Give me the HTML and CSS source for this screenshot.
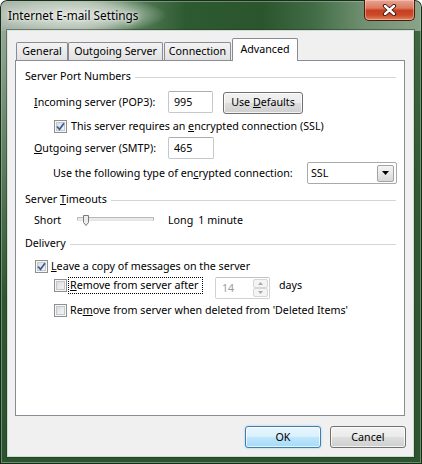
FILE: index.html
```html
<!DOCTYPE html>
<html>
<head>
<meta charset="utf-8">
<title>Internet E-mail Settings</title>
<link rel="stylesheet" href="styles.css">
</head>
<body>
<div class="window">
  <div class="titlebar">
    <span class="title">Internet E-mail Settings</span>
    <span class="close">
      <svg width="15" height="12" viewBox="0 0 15 12"><path d="M3 2 L12 10 M12 2 L3 10" stroke="#3a1208" stroke-width="4.2" stroke-linecap="round" fill="none"/><path d="M3 2 L12 10 M12 2 L3 10" stroke="#fff" stroke-width="2.4" stroke-linecap="round" fill="none"/></svg>
    </span>
  </div>
  <div class="client">
    <div class="tabs">
      <div class="tab t-general">General</div>
      <div class="tab t-outgoing">Outgoing Server</div>
      <div class="tab t-connection">Connection</div>
      <div class="tab tab-active t-advanced">Advanced</div>
    </div>
    <div class="panel">
      <div class="group-head g1"><span>Server Port Numbers</span><i class="rule"></i></div>
      <div class="row r-incoming">
        <span class="lbl"><u>I</u>ncoming server (POP3):</span>
        <span class="field f-in">995</span>
        <span class="btn btn-defaults"><span>Use <u>D</u>efaults</span></span>
      </div>
      <div class="row r-ssl">
        <span class="cb"><svg width="9" height="9" viewBox="0 0 9 9"><path d="M1 4.5 L3.5 7.3 L8 1.2" fill="none" stroke="#3c5a98" stroke-width="1.7"/></svg></span>
        <span class="cbtext">This server requires an <u>e</u>ncrypted connection (SSL)</span>
      </div>
      <div class="row r-outgoing">
        <span class="lbl"><u>O</u>utgoing server (SMTP):</span>
        <span class="field f-out">465</span>
      </div>
      <div class="row r-type">
        <span>Use the following type of en<u>c</u>rypted connection:</span>
        <span class="select"><span class="sel-val">SSL</span><span class="drop"><svg width="7" height="4" viewBox="0 0 7 4"><path d="M0 0 H7 L3.5 4 Z" fill="#000"/></svg></span></span>
      </div>
      <div class="group-head g2"><span>Server <u>T</u>imeouts</span><i class="rule"></i></div>
      <div class="row r-slider">
        <span class="short">Short</span>
        <span class="slider"><span class="track"></span><svg class="thumb" width="7" height="11" viewBox="0 0 7 11"><path d="M0.5 0.5 H5.5 V7.5 L3 10.5 L0.5 7.5 Z" fill="#ececec" stroke="#7a7a7a"/></svg></span>
        <span class="long">Long</span>
        <span class="minute">1 minute</span>
      </div>
      <div class="group-head g3"><span>Delivery</span><i class="rule"></i></div>
      <div class="row r-leave">
        <span class="cb"><svg width="9" height="9" viewBox="0 0 9 9"><path d="M1 4.5 L3.5 7.3 L8 1.2" fill="none" stroke="#3c5a98" stroke-width="1.7"/></svg></span>
        <span class="cbtext-s"><u>L</u>eave a copy of messages on the server</span>
      </div>
      <div class="row r-after">
        <span class="cb"></span>
        <span class="focus"><u>R</u>emove from server after</span>
        <span class="spin"><span class="spin-val">14</span><span class="spin-btns"><span class="sb"><svg width="5" height="3" viewBox="0 0 5 3"><path d="M0 3 L2.5 0 L5 3 Z" fill="#a8a8a8"/></svg></span><span class="sb"><svg width="5" height="3" viewBox="0 0 5 3"><path d="M0 0 H5 L2.5 3 Z" fill="#a8a8a8"/></svg></span></span></span>
        <span class="days">days</span>
      </div>
      <div class="row r-deleted">
        <span class="cb"></span>
        <span class="cbtext-s">Re<u>m</u>ove from server when deleted from 'Deleted Items'</span>
      </div>
    </div>
    <div class="buttons">
      <span class="btn btn-ok"><span>OK</span></span>
      <span class="btn btn-cancel"><span>Cancel</span></span>
    </div>
  </div>
</div>
</body>
</html>
```

FILE: styles.css
```css
html, body {
  margin: 0;
  padding: 0;
  background: #ffffff;
}

body {
  font-family: "Noto Sans", "Open Sans", sans-serif;
  font-size: 10.7px;
  line-height: 15px;
  color: #000;
}

u {
  text-decoration: underline;
  text-underline-offset: 1px;
}

.window {
  width: 422px;
  height: 464px;
  box-sizing: border-box;
  padding: 0 9px 8px 8px;
  display: flex;
  flex-direction: column;
  border-radius: 7px 7px 0 0;
  box-shadow: inset 0 0 0 1px #1a2a1b, inset 0 0 0 2px rgba(170, 200, 170, 0.5);
  background:
    radial-gradient(ellipse 95px 20px at 72px 15px, rgba(222, 229, 222, 0.95) 0%, rgba(205, 216, 205, 0.65) 60%, rgba(205, 216, 205, 0) 100%),
    linear-gradient(90deg, #a3b1a3 0%, #98a898 20%, #557d57 32%, #2e5a31 44%, #2a552d 62%, #406b44 74%, #6f8f70 86%, #8aa48a 100%) 0 0 / 100% 31px no-repeat,
    linear-gradient(180deg, rgba(165, 180, 165, 0.95) 0px, rgba(165, 180, 165, 0.5) 120px, rgba(165, 180, 165, 0) 300px) 0 0 / 8px 100% no-repeat,
    linear-gradient(180deg, #3f6a42 0%, #2e5931 40%, #2b552f 100%);
}

.titlebar {
  height: 31px;
  display: flex;
  align-items: flex-start;
  flex: none;
}

.title {
  padding-top: 7px;
  font-size: 11.8px;
  line-height: 16px;
  color: #000;
  text-shadow: 0 0 6px rgba(255, 255, 255, 0.9), 0 0 3px rgba(255, 255, 255, 0.8);
}

.close {
  margin-left: auto;
  margin-right: -2px;
  width: 51px;
  height: 21px;
  box-sizing: border-box;
  border: 1px solid #4a1a10;
  border-top: none;
  border-radius: 0 0 5px 5px;
  background: linear-gradient(180deg, #e9a493 0%, #dc7a62 40%, #c7401f 52%, #c94a28 75%, #e3855f 100%);
  box-shadow: inset 0 0 0 1px rgba(255, 220, 210, 0.45);
  display: flex;
  align-items: center;
  justify-content: center;
}

.client {
  flex: none;
  width: 405px;
  height: 425px;
  box-sizing: border-box;
  padding: 7px 8px 8px 7px;
  background: #f0f0f0;
  box-shadow: 0 0 0 1px rgba(255, 255, 255, 0.8), 0 0 0 2px rgba(30, 50, 30, 0.45);
  display: flex;
  flex-direction: column;
}

.tabs {
  height: 22px;
  display: flex;
  align-items: flex-end;
  margin-left: 1px;
  flex: none;
}

.tab {
  height: 18px;
  box-sizing: border-box;
  border: 1px solid #898c95;
  border-bottom: none;
  background: linear-gradient(180deg, #f3f3f3 0%, #ebebeb 50%, #e1e1e1 100%);
  text-align: center;
  padding-top: 1px;
  border-radius: 2px 2px 0 0;
}

.t-general { width: 52px; }
.t-outgoing { width: 95px; margin-left: 0; }
.t-connection { width: 67px; margin-left: 1px; }

.tab-active {
  position: relative;
  z-index: 1;
  height: 23px;
  margin-bottom: -1px;
  background: #fff;
  padding-top: 3px;
}

.t-advanced { width: 66px; margin-left: 1px; }

.panel {
  height: 356px;
  box-sizing: border-box;
  border: 1px solid #898c95;
  background: #fff;
  padding: 8px 8px 0 9px;
  flex: none;
}

.group-head {
  display: flex;
  align-items: center;
  height: 15px;
}

.rule {
  flex: 1;
  height: 1px;
  background: #d5d5d5;
  margin-left: 4px;
  margin-top: 1px;
}

.g2 { margin-top: 8px; }
.g3 { margin-top: 8px; }

.row {
  display: flex;
  align-items: center;
}

.r-incoming {
  margin-top: 7px;
  height: 22px;
  padding-left: 9px;
}

.lbl {
  width: 134px;
  flex: none;
}

.field {
  height: 22px;
  box-sizing: border-box;
  border: 1px solid #c5c7cc;
  border-top-color: #abadb3;
  border-radius: 2px;
  background: #fff;
  padding-left: 5px;
  display: flex;
  align-items: center;
}

.f-in { width: 45px; }
.f-out { width: 46px; }

.btn {
  box-sizing: border-box;
  height: 22px;
  border: 1px solid #707070;
  border-radius: 3px;
  background: linear-gradient(180deg, #f2f2f2 0%, #ebebeb 48%, #dddddd 52%, #cfcfcf 100%);
  box-shadow: inset 0 0 0 1px rgba(255, 255, 255, 0.75);
  display: flex;
  align-items: center;
  justify-content: center;
}

.btn-defaults {
  width: 80px;
  margin-left: 10px;
  margin-top: 1px;
}

.r-ssl {
  margin-top: 6px;
  height: 15px;
  padding-left: 29px;
}

.cb {
  width: 13px;
  height: 13px;
  box-sizing: border-box;
  flex: none;
  border: 1px solid #8e8f8f;
  background: linear-gradient(135deg, #cdd1d6 0%, #e8eaec 50%, #f8f8f8 100%);
  box-shadow: inset 0 0 0 1px #f6f6f6, inset 0 0 0 2px #c4c8cd;
  display: flex;
  align-items: center;
  justify-content: center;
}

.cbtext { margin-left: 4px; }
.cbtext-s { margin-left: 3px; }

.r-outgoing {
  margin-top: 3px;
  height: 22px;
  padding-left: 9px;
}

.r-type {
  margin-top: 3px;
  height: 22px;
  padding-left: 28px;
}

.select {
  margin-left: auto;
  margin-right: -1px;
  width: 90px;
  height: 22px;
  box-sizing: border-box;
  border: 1px solid #a9a9a9;
  border-radius: 2px;
  background: #fff;
  display: flex;
  align-items: center;
  padding: 0 2px 0 3px;
}

.sel-val { flex: 1; }

.drop {
  width: 17px;
  height: 17px;
  box-sizing: border-box;
  border: 1px solid #a3a3a3;
  border-radius: 2px;
  background: linear-gradient(180deg, #f4f4f4 0%, #e8e8e8 50%, #d8d8d8 100%);
  display: flex;
  align-items: center;
  justify-content: center;
}

.r-slider {
  margin-top: 5px;
  height: 16px;
  padding-left: 9px;
}

.short {
  width: 43px;
  flex: none;
}

.slider {
  position: relative;
  width: 77px;
  height: 16px;
  flex: none;
}

.track {
  display: block;
  margin-top: 5px;
  height: 4px;
  box-sizing: border-box;
  border: 1px solid #b9b9b9;
  border-bottom-color: #e4e4e4;
  border-radius: 1px;
  background: #e9eaea;
}

.thumb {
  position: absolute;
  left: 6px;
  top: 3px;
}

.long {
  margin-left: 14px;
  flex: none;
}

.minute {
  margin-left: 5px;
}

.r-leave {
  margin-top: 8px;
  height: 15px;
  padding-left: 10px;
}

.r-after {
  margin-top: 3px;
  height: 22px;
  padding-left: 29px;
  align-items: flex-start;
}

.r-after .cb { margin-top: 2px; }

.focus {
  margin-left: 1px;
  width: 135px;
  flex: none;
  box-sizing: border-box;
  border: 1px dotted #000;
  padding: 0 1px;
  line-height: 15px;
}

.spin {
  margin-left: 12px;
  width: 55px;
  height: 22px;
  box-sizing: border-box;
  border: 1px solid #d0d2d6;
  border-top-color: #c0c2c7;
  border-radius: 2px;
  background: #fff;
  display: flex;
  align-items: center;
  padding: 1px 1px 1px 6px;
  flex: none;
}

.spin-val {
  flex: 1;
  color: #9a9a9a;
}

.spin-btns {
  width: 15px;
  height: 18px;
  display: flex;
  flex-direction: column;
}

.sb {
  flex: 1;
  box-sizing: border-box;
  border: 1px solid #d6d6d6;
  border-radius: 2px;
  background: #f4f4f4;
  display: flex;
  align-items: center;
  justify-content: center;
}

.days {
  margin-left: 9px;
  margin-top: 1px;
}

.r-deleted {
  margin-top: 4px;
  height: 15px;
  padding-left: 29px;
}

.buttons {
  display: flex;
  justify-content: flex-end;
  gap: 9px;
  margin-top: 10px;
  margin-right: -1px;
  flex: none;
}

.btn-ok,
.btn-cancel {
  width: 76px;
}

.btn-ok {
  border-color: #3c7fb1;
  background: linear-gradient(180deg, #eaf6fd 0%, #d9f0fc 48%, #bee6fd 52%, #a7d9f5 100%);
  box-shadow: inset 0 0 0 1px rgba(255, 255, 255, 0.7), 0 0 2px rgba(60, 160, 230, 0.55);
}
```
